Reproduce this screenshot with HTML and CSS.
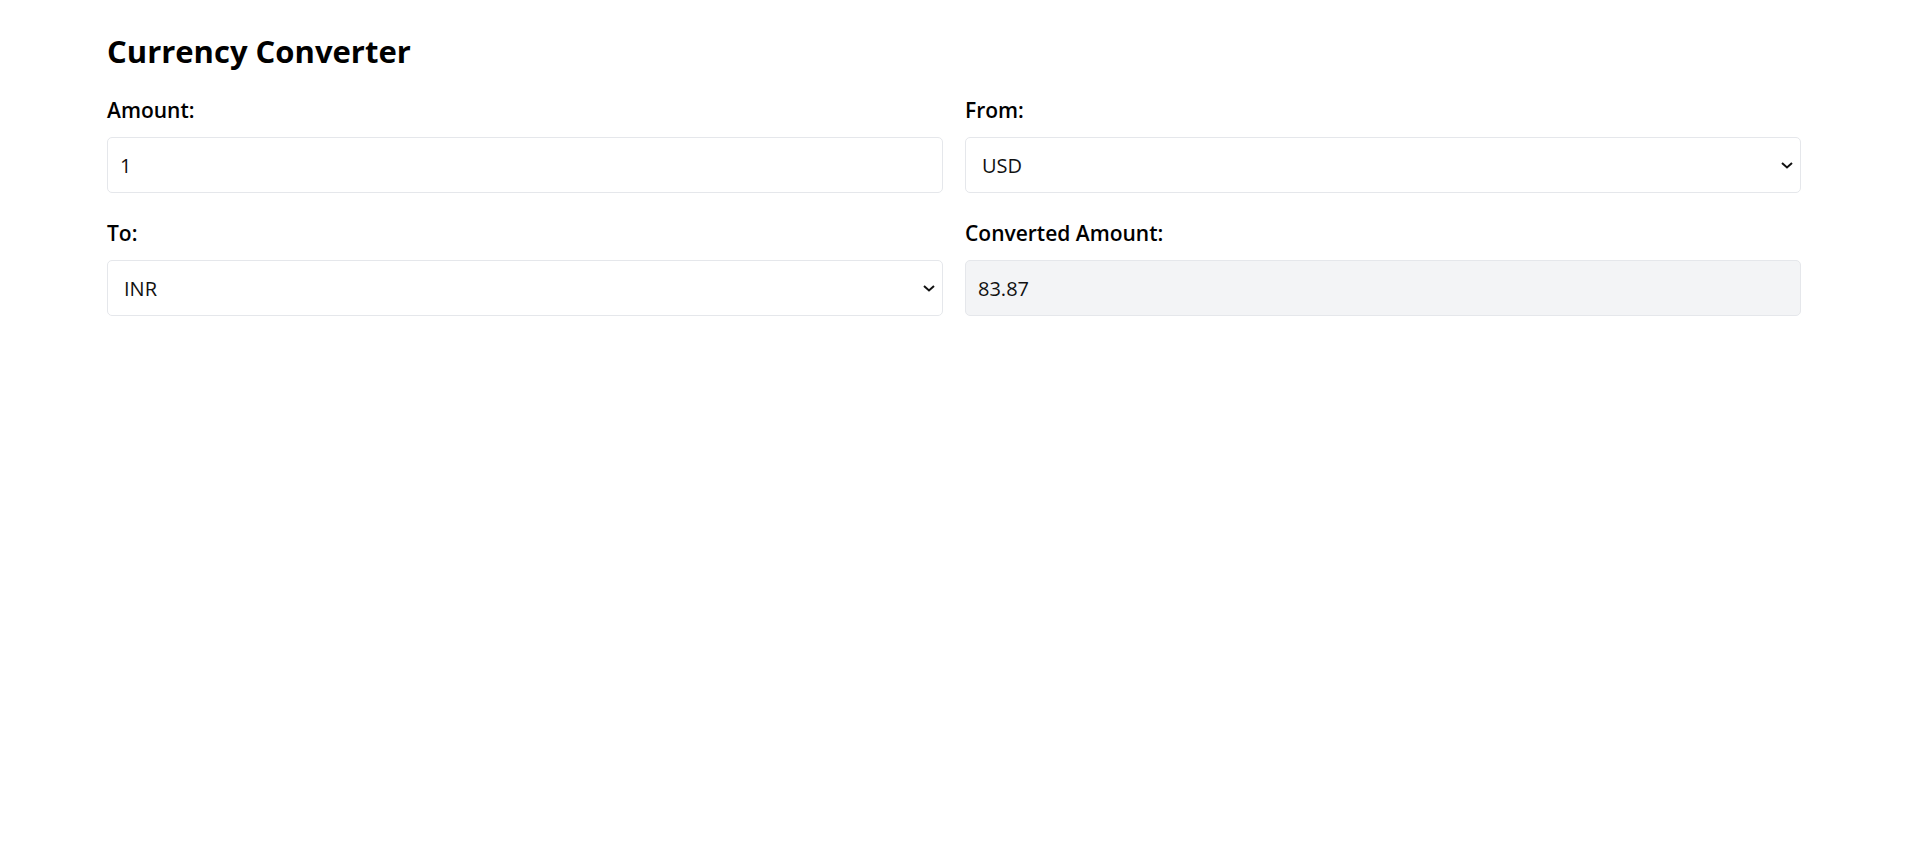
FILE: index.html
```html
<!DOCTYPE html>
<html lang="en">
<head>
<meta charset="utf-8">
<title>Currency Converter</title>
<link rel="stylesheet" href="styles.css">
</head>
<body>
<main class="converter">
  <h1 class="title">Currency Converter</h1>
  <div class="grid">
    <div class="field">
      <label class="label" for="amount">Amount:</label>
      <input class="control" id="amount" type="text" value="1">
    </div>
    <div class="field">
      <label class="label" for="from">From:</label>
      <div class="select-wrap">
        <select class="control select" id="from"><option>USD</option><option>INR</option></select>
        <svg class="chevron" viewBox="0 0 12 7" width="12" height="7"><path d="M1 1l5 4.5L11 1" fill="none" stroke="#111" stroke-width="2"/></svg>
      </div>
    </div>
    <div class="field">
      <label class="label" for="to">To:</label>
      <div class="select-wrap">
        <select class="control select" id="to"><option>INR</option><option>USD</option></select>
        <svg class="chevron" viewBox="0 0 12 7" width="12" height="7"><path d="M1 1l5 4.5L11 1" fill="none" stroke="#111" stroke-width="2"/></svg>
      </div>
    </div>
    <div class="field">
      <label class="label" for="result">Converted Amount:</label>
      <input class="control readonly" id="result" type="text" value="83.87" readonly>
    </div>
  </div>
</main>
</body>
</html>
```

FILE: styles.css
```css
* { box-sizing: border-box; }

html, body {
  margin: 0;
  padding: 0;
  background: #ffffff;
}

body {
  font-family: "Open Sans", "Noto Sans", sans-serif;
  color: #000000;
}

.converter {
  width: 1694px;
  margin-left: 107px;
  padding-top: 31px;
}

.title {
  margin: 0 0 23px 0;
  font-size: 31px;
  line-height: 40px;
  font-weight: 700;
}

.grid {
  display: grid;
  grid-template-columns: 1fr 1fr;
  column-gap: 22px;
  row-gap: 24px;
}

.field {
  display: flex;
  flex-direction: column;
}

.label {
  display: block;
  font-size: 21px;
  line-height: 30px;
  font-weight: 600;
  padding-top: 1px;
  margin-bottom: 12px;
}

.control {
  display: block;
  width: 100%;
  height: 56px;
  margin: 0;
  padding: 0 12px;
  border: 1px solid #e5e7eb;
  border-radius: 5px;
  background: #ffffff;
  font-family: inherit;
  font-size: 20px;
  color: #111111;
  outline: none;
}

.select-wrap {
  position: relative;
}

.select {
  appearance: none;
  -webkit-appearance: none;
  padding-left: 16px;
}

.chevron {
  position: absolute;
  right: 8px;
  top: 50%;
  margin-top: -3px;
  pointer-events: none;
}

.readonly {
  background: #f3f4f6;
}
```
